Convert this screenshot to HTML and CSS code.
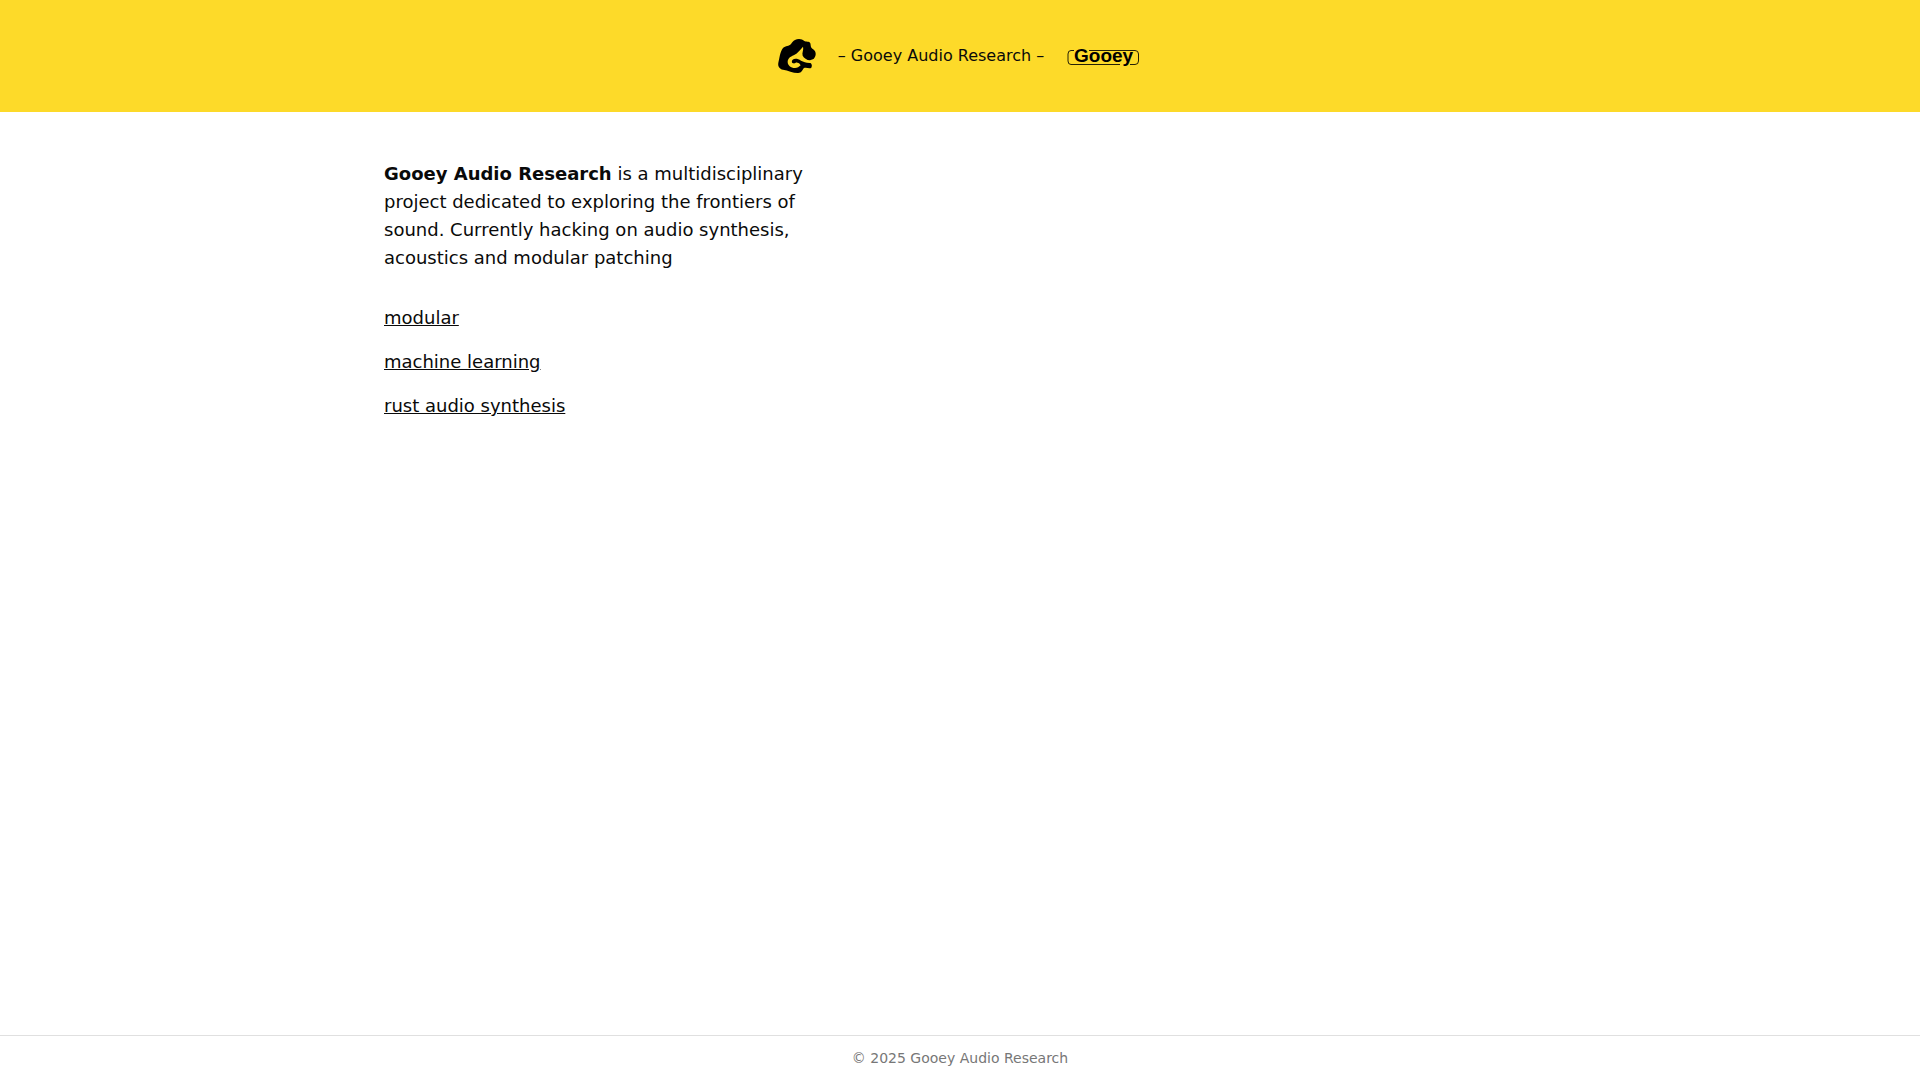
FILE: index.html
```html
<!DOCTYPE html>
<html lang="en">
<head>
    <meta charset="UTF-8">
    <meta name="viewport" content="width=device-width, initial-scale=1.0">
    <title>Gooey Audio Research</title>
    <link rel="stylesheet" href="styles.css">
</head>
<body>
    <header class="site-header">
        <svg class="logo-icon" viewBox="3 0 144 144" aria-hidden="true">
            <path class="blob" d="M66 24 C74 19 88 20 94 27 C98 31 109 26 112 34 C114 42 112 46 119 51 C129 57 131 68 124 78 C120 86 115 85 110 92 C115 93 119 99 115 107 C109 112 99 104 92 109 C88 115 85 124 74 123 C60 123 45 115 30 113 C19 111 14 102 16 92 C20 76 21 60 30 48 C38 41 48 43 54 36 C58 31 60 27 66 24 Z"/>
            <path class="cut" d="M90 44 C93 53 86 62 89 71 C93 78 101 84 111 85 L124 80 L119 93 L110 93 C98 93 92 89 84 86 C75 80 65 79 59 83 C55 87 56 93 61 94 C66 95 68 91 73 92 C78 92 81 96 83 100 C78 105 73 108 66 108 C53 108 44 100 44 90 C44 80 52 74 62 70 C74 65 81 53 90 44 Z"/>
        </svg>
        <span class="site-title">– Gooey Audio Research –</span>
        <svg class="logo-text" viewBox="0 0 86 48" role="img" aria-label="Gooey">
            <path class="frame" d="M14 18.500 H11 Q8 18.500 8 22 V29 Q8 32.500 11 32.500 H60 M70 32.500 H75 Q78.500 32.500 78.500 29 V22 Q78.500 18.500 75 18.500 H29"/>
            <text class="wordmark" x="14" y="30">Gooey</text>
        </svg>
    </header>

    <main class="content">
        <p class="intro"><strong>Gooey Audio Research</strong> is a multidisciplinary project dedicated to exploring the frontiers of sound. Currently hacking on audio synthesis, acoustics and modular patching</p>
        <ul class="links">
            <li><a href="#modular">modular</a></li>
            <li><a href="#machine-learning">machine learning</a></li>
            <li><a href="#rust">rust audio synthesis</a></li>
        </ul>
    </main>

    <footer class="site-footer">© 2025 Gooey Audio Research</footer>
</body>
</html>
```
FILE: styles.css
```css
* {
    box-sizing: border-box;
}
body {
    font-family: "DejaVu Sans", sans-serif;
    margin: 0;
    min-height: 100vh;
    display: flex;
    flex-direction: column;
    background-color: white;
    color: #0a0a0a;
}
.site-header {
    display: flex;
    justify-content: center;
    align-items: center;
    gap: 16px;
    padding: 32px 16px;
    background-color: #fdda29;
}
.logo-icon {
    width: 48px;
    height: 48px;
}
.blob {
    fill: black;
}
.cut {
    fill: #fdda29;
}
.site-title {
    font-size: 16px;
    line-height: 24px;
}
.logo-text {
    width: 86px;
    height: 48px;
}
.frame {
    fill: none;
    stroke: black;
    stroke-width: 1;
    stroke-opacity: 0.85;
}
.wordmark {
    font-family: "Liberation Sans", sans-serif;
    font-size: 19px;
    font-weight: bold;
    fill: black;
}
.content {
    flex: 1;
    width: 100%;
    max-width: 1152px;
    margin: 0 auto;
    padding: 48px 0;
    font-size: 18px;
    line-height: 28px;
}
.intro {
    max-width: 448px;
    margin: 0 0 32px;
}
.links {
    display: flex;
    flex-direction: column;
    gap: 16px;
    list-style: none;
    margin: 0;
    padding: 0;
}
.links a {
    color: inherit;
    text-decoration: underline;
}
.site-footer {
    padding: 12px;
    border-top: 1px solid #e0e0e0;
    text-align: center;
    font-size: 14px;
    line-height: 20px;
    color: #777;
}
```
